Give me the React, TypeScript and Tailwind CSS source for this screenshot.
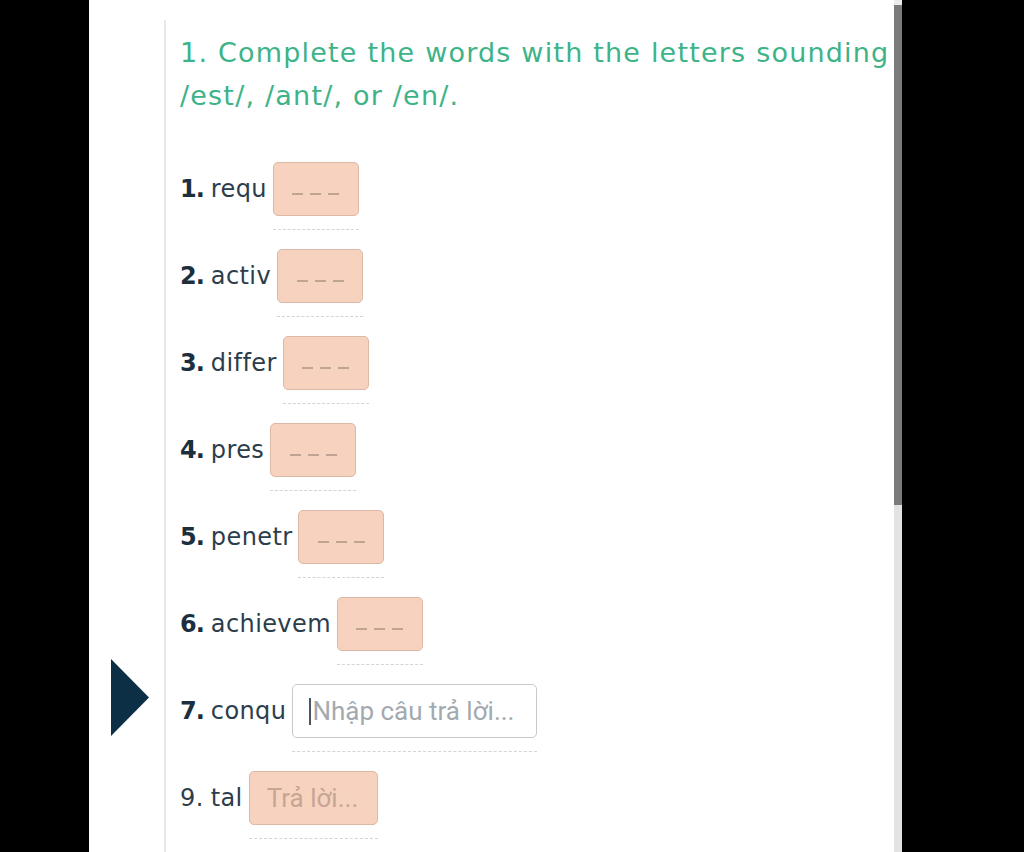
import React from "react";

const items = [
  { n: "1.", w: "requ", bold: true },
  { n: "2.", w: "activ", bold: true },
  { n: "3.", w: "differ", bold: true },
  { n: "4.", w: "pres", bold: true },
  { n: "5.", w: "penetr", bold: true },
  { n: "6.", w: "achievem", bold: true },
];

function Dashes() {
  return (
    <div className="flex gap-[7px] mt-[10px]">
      <div className="w-[11px] h-[2px] bg-[#bfa393]" />
      <div className="w-[11px] h-[2px] bg-[#bfa393]" />
      <div className="w-[11px] h-[2px] bg-[#bfa393]" />
    </div>
  );
}

function Label({ n, w, bold }: { n: string; w: string; bold: boolean }) {
  return (
    <div className="h-[54px] flex items-center text-[24px] tracking-[0.4px] text-[#2c3d4b] whitespace-nowrap font-['DejaVu_Sans',sans-serif]">
      <span className={bold ? "font-semibold text-[#1b2f3f] tracking-[-1px]" : ""}>{n}</span>
      <span className="ml-[7px]">{w}</span>
    </div>
  );
}

export default function App() {
  return (
    <div className="w-[1024px] h-[852px] bg-black flex overflow-hidden font-['DejaVu_Sans',sans-serif]">
      <div className="ml-[89px] w-[813px] h-full bg-white flex relative">
        <div className="flex-1 flex flex-col">
          <div className="h-[3px] bg-white" />
          <div className="h-[1px] bg-[#e3e3e3]" />
          <div className="flex flex-1 mt-[20px]">
            <div className="w-[75px] shrink-0" />
            <div className="w-[2px] bg-[#e8e8e8] shrink-0" />
            <div className="flex-1 pl-[14px] pt-[11px]">
              <div className="text-[27px] leading-[43px] tracking-[1.2px] text-[#3db388] whitespace-nowrap">
                1. Complete the words with the letters sounding
                <br />
                /est/, /ant/, or /en/.
              </div>
              <div className="mt-[45px] flex flex-col">
                {items.map((it) => (
                  <div key={it.n} className="h-[87px] flex items-start">
                    <Label {...it} />
                    <div className="ml-[6px] flex flex-col">
                      <div className="w-[86px] h-[54px] rounded-[5px] bg-[#f7d3bf] border border-[#dbb9a6] flex items-center justify-center">
                        <Dashes />
                      </div>
                      <div className="mt-[13px] border-t border-dashed border-[#d4d4d4]" />
                    </div>
                  </div>
                ))}
                <div className="h-[87px] flex items-start">
                  <Label n="7." w="conqu" bold />
                  <div className="ml-[6px] flex flex-col">
                    <div className="w-[245px] h-[54px] rounded-[5px] bg-white border border-[#c9c9c9] flex items-center pl-[16px]">
                      <div className="w-[2px] h-[27px] bg-[#4a5660]" />
                      <span className="ml-[1px] text-[26px] text-[#a2aaaf] font-['Roboto',sans-serif] whitespace-nowrap">
                        Nhập câu trả lời...
                      </span>
                    </div>
                    <div className="mt-[13px] border-t border-dashed border-[#d4d4d4]" />
                  </div>
                </div>
                <div className="h-[87px] flex items-start">
                  <Label n="9." w="tal" bold={false} />
                  <div className="ml-[6px] flex flex-col">
                    <div className="w-[129px] h-[54px] rounded-[5px] bg-[#f7d3bf] border border-[#dbb9a6] flex items-center pl-[17px]">
                      <span className="text-[26px] text-[#c6a594] font-['Roboto',sans-serif] whitespace-nowrap">Trả lời...</span>
                    </div>
                    <div className="mt-[13px] border-t border-dashed border-[#d4d4d4]" />
                  </div>
                </div>
              </div>
            </div>
          </div>
        </div>
        <div className="w-[8px] shrink-0 flex flex-col">
          <div className="h-[5px] bg-[#ececec]" />
          <div className="h-[500px] bg-[#7b7b7b]" />
          <div className="flex-1 bg-[#e2e2e2]" />
        </div>
        <svg className="absolute left-[22px] top-[659px]" width="38" height="77" viewBox="0 0 38 77">
          <polygon points="0,0 38,38.5 0,77" fill="#0c2f45" />
        </svg>
      </div>
    </div>
  );
}
